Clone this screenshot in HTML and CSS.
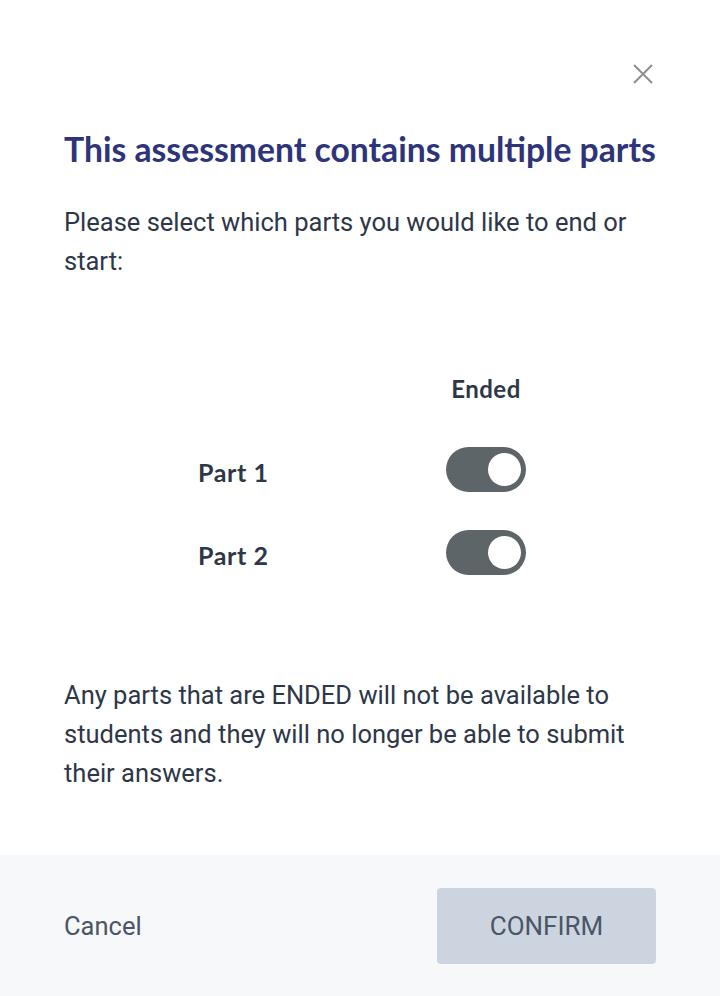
FILE: index.html
```html
<!DOCTYPE html>
<html>
<head>
  <meta charset="UTF-8">
  <title>Multiple parts</title>
  <link rel="stylesheet" href="styles.css">
</head>
<body>
  <div class="modal">
    <div class="modal__body">
      <div class="modal__top">
        <button class="modal__close" aria-label="Close">
          <svg width="22" height="22" viewBox="0 0 22 22"><path d="M2 2 L20 20 M20 2 L2 20" stroke="#8f8f8f" stroke-width="2" fill="none"/></svg>
        </button>
      </div>
      <h1 class="modal__title">This assessment contains multiple parts</h1>
      <p class="modal__text">Please select which parts you would like to end or start:</p>

      <div class="parts">
        <span></span>
        <span class="parts__head">Ended</span>

        <span class="parts__label">Part 1</span>
        <span class="toggle toggle--on"><span class="toggle__knob"></span></span>

        <span class="parts__label">Part 2</span>
        <span class="toggle toggle--on"><span class="toggle__knob"></span></span>
      </div>

      <p class="modal__text modal__note">Any parts that are ENDED will not be available to students and they will no longer be able to submit their answers.</p>
    </div>

    <div class="modal__footer">
      <button class="btn-link">Cancel</button>
      <button class="btn-confirm">CONFIRM</button>
    </div>
  </div>
</body>
</html>
```

FILE: styles.css
```css
/* Modal layout */
body {
  margin: 0;
  background-color: #fff;
  font-family: Roboto, "Liberation Sans", sans-serif;
  color: #2d3748;
}

.modal {
  height: 996px;
  display: flex;
  flex-direction: column;
}

.modal__body {
  flex: 1;
  padding: 0 64px;
}

.modal__top {
  display: flex;
  justify-content: flex-end;
  padding-top: 63px;
}

.modal__close {
  border: none;
  background: none;
  padding: 0;
  margin-right: 2px;
  width: 22px;
  height: 22px;
  cursor: pointer;
}

.modal__title {
  margin: 44px 0 0;
  font-family: Lato, sans-serif;
  font-weight: 700;
  font-size: 33.7px;
  line-height: 40px;
  color: #2e3479;
}

.modal__text {
  margin: 34px 0 0;
  font-size: 25.5px;
  line-height: 39px;
  color: #2d3748;
}

/* Parts table */
.parts {
  display: grid;
  grid-template-columns: 248px 80px;
  align-items: center;
  row-gap: 38px;
  width: 328px;
  margin: 93px auto 0;
  padding-left: 4px;
}

.parts__head {
  text-align: center;
  font-family: Lato, sans-serif;
  font-weight: 700;
  font-size: 24px;
  letter-spacing: 0.5px;
  line-height: 30px;
  margin-bottom: 5px;
}

.parts__label {
  padding-top: 4px;
  font-family: Lato, sans-serif;
  font-weight: 700;
  font-size: 25px;
  letter-spacing: 0.6px;
}

.toggle {
  position: relative;
  display: block;
  width: 80px;
  height: 45px;
  border-radius: 23px;
  background-color: #5e6568;
}

.toggle__knob {
  position: absolute;
  top: 6px;
  right: 5px;
  width: 33px;
  height: 33px;
  border-radius: 50%;
  background-color: #fff;
}

.modal__note {
  margin-top: 101px;
}

/* Footer */
.modal__footer {
  height: 141px;
  display: flex;
  justify-content: space-between;
  align-items: center;
  padding: 0 64px;
  background-color: #f7f8fa;
}

.btn-link {
  border: none;
  background: none;
  padding: 0;
  font-family: Roboto, sans-serif;
  font-size: 25.5px;
  color: #4a5568;
}

.btn-confirm {
  width: 219px;
  height: 76px;
  border: none;
  border-radius: 4px;
  background-color: #ccd5df;
  font-family: Roboto, sans-serif;
  font-size: 26px;
  color: #4a5568;
}
```
